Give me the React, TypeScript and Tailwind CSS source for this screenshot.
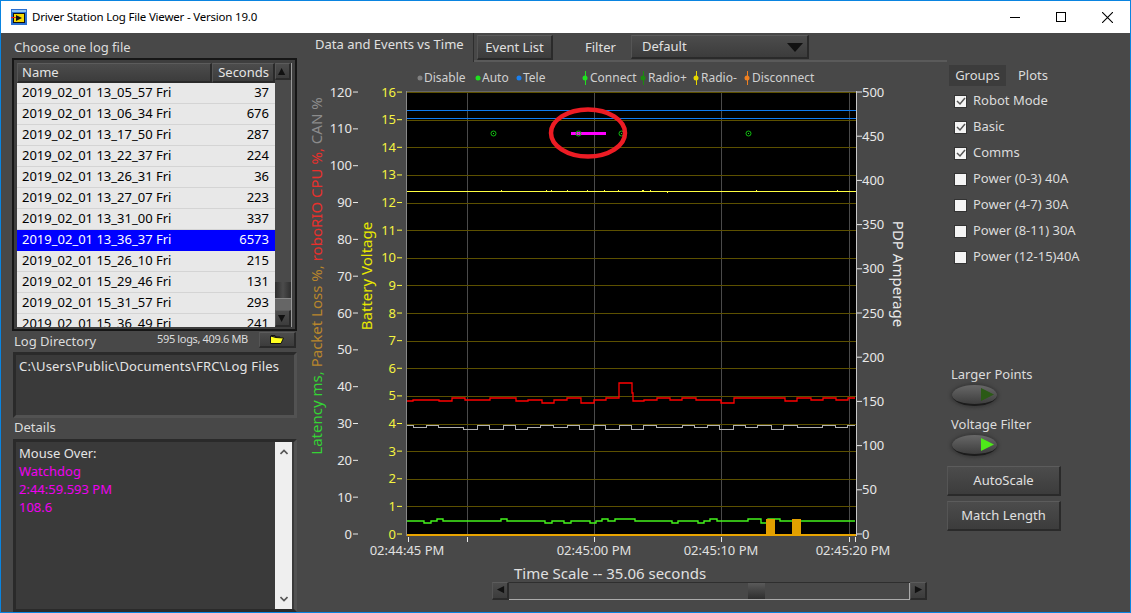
import type { ReactNode } from "react";

const logs = [
  ["2019_02_01 13_05_57 Fri", "37"],
  ["2019_02_01 13_06_34 Fri", "676"],
  ["2019_02_01 13_17_50 Fri", "287"],
  ["2019_02_01 13_22_37 Fri", "224"],
  ["2019_02_01 13_26_31 Fri", "36"],
  ["2019_02_01 13_27_07 Fri", "223"],
  ["2019_02_01 13_31_00 Fri", "337"],
  ["2019_02_01 13_36_37 Fri", "6573"],
  ["2019_02_01 15_26_10 Fri", "215"],
  ["2019_02_01 15_29_46 Fri", "131"],
  ["2019_02_01 15_31_57 Fri", "293"],
  ["2019_02_01 15_36_49 Fri", "241"],
];

const groups = [
  ["Robot Mode", true],
  ["Basic", true],
  ["Comms", true],
  ["Power (0-3) 40A", false],
  ["Power (4-7) 30A", false],
  ["Power (8-11) 30A", false],
  ["Power (12-15)40A", false],
] as const;

// step traces: [x where the step ends, y], in page pixels
const red = [[413, 401], [439, 400], [452, 401], [465, 398], [490, 400], [516, 398], [528, 401], [542, 400], [554, 403], [567, 400], [581, 398], [594, 403], [606, 400], [619, 398], [632, 383], [633, 393], [644, 401], [657, 400], [670, 398], [682, 400], [696, 398], [721, 400], [734, 403], [785, 398], [797, 401], [811, 398], [823, 400], [836, 398], [848, 400], [855, 398]];
const gray = [[413, 425], [426, 427], [438, 425], [463, 427], [477, 429], [489, 425], [503, 429], [515, 425], [527, 429], [540, 427], [553, 425], [567, 427], [579, 425], [593, 429], [605, 425], [619, 429], [631, 425], [643, 429], [656, 425], [682, 427], [694, 425], [707, 427], [719, 425], [733, 429], [745, 425], [757, 427], [771, 425], [783, 429], [797, 425], [822, 427], [835, 425], [847, 427], [855, 425]];
const green = [[424, 521], [431, 523], [437, 521], [443, 519], [501, 521], [507, 519], [545, 521], [552, 523], [564, 521], [571, 523], [590, 521], [596, 523], [602, 521], [608, 519], [615, 521], [622, 519], [635, 519], [672, 521], [678, 523], [698, 521], [704, 523], [710, 521], [717, 519], [748, 521], [761, 519], [768, 523], [780, 519], [855, 521]];

function stepPath(points: number[][]) {
  let x = 407;
  let d = "";
  points.forEach(([end, y], i) => {
    d += `${i === 0 ? "M" : "L"}${x} ${y}L${end} ${y}`;
    x = end;
  });
  return d;
}

const leftTicks = [120, 110, 100, 90, 80, 70, 60, 50, 40, 30, 20, 10, 0];
const voltTicks = [16, 15, 14, 13, 12, 11, 10, 9, 8, 7, 6, 5, 4, 3, 2, 1, 0];
const ampTicks = [500, 450, 400, 350, 300, 250, 200, 150, 100, 50, 0];
const yellowDots = [501, 546, 551, 567, 587, 604, 618, 642, 643, 650, 667, 756, 837];
const circles = [493, 578, 621, 748];
const timeTicks = [408, 467, 594, 721, 849, 855];
const timeLabels = [[407, "02:44:45 PM"], [594, "02:45:00 PM"], [721, "02:45:10 PM"], [853, "02:45:20 PM"]] as const;

function Chart() {
  const plotFont = { fontFamily: "'Noto Sans', sans-serif" };
  return (
    <svg viewBox="305 86 615 479" className="block w-[615px] h-[479px] ml-[5px]" style={plotFont}>
      <rect x="407" y="92" width="449" height="443" fill="#000" />
      <line x1="406.5" y1="91" x2="406.5" y2="536" stroke="#888" />
      <line x1="407" y1="91.5" x2="856" y2="91.5" stroke="#666" />
      <line x1="856.5" y1="91" x2="856.5" y2="536" stroke="#c8c8c8" />

      {[467, 594, 721, 849].map((x) => (
        <line key={x} x1={x + 0.5} y1="92" x2={x + 0.5} y2="535" stroke="#4a4a4a" />
      ))}
      {voltTicks.slice(0, -1).map((v) => {
        const y = Math.round(534 - v * 27.62) + 0.5;
        return <line key={v} x1="407" y1={y} x2="856" y2={y} stroke="#5c5000" />;
      })}

      <line x1="407" y1="110.5" x2="856" y2="110.5" stroke="#0f7bf0" />
      <line x1="407" y1="118.5" x2="856" y2="118.5" stroke="#0f7bf0" />
      <line x1="407" y1="191.5" x2="856" y2="191.5" stroke="#ffff40" />
      {yellowDots.map((x) => (
        <rect key={x} x={x} y={x === 667 ? 192 : 190} width="1" height="1" fill="#ffff40" />
      ))}

      <path d={stepPath(red)} fill="none" stroke="#ff0000" strokeWidth="1.3" />
      <path d={stepPath(gray)} fill="none" stroke="#b0b0b0" shapeRendering="crispEdges" />
      <path d={stepPath(green)} fill="none" stroke="#44f41c" strokeWidth="1.4" />

      <rect x="766" y="519" width="9" height="16" fill="#e2a000" />
      <rect x="792" y="519" width="9" height="16" fill="#e2a000" />
      <rect x="407" y="534" width="449" height="2" fill="#e8a400" />

      <rect x="571" y="132" width="35" height="3" fill="#ff00ff" />
      {circles.map((x) => (
        <g key={x}>
          <circle cx={x + 0.5} cy="133.5" r="2.5" fill="none" stroke="#10c010" />
          <rect x={x} y="133" width="1" height="1" fill="#20e020" />
        </g>
      ))}
      <ellipse cx="588" cy="133" rx="37" ry="23.5" fill="none" stroke="#ed1c24" strokeWidth="4.5" />

      {leftTicks.map((v) => {
        const y = 534 - v * 3.683;
        return (
          <g key={v}>
            <line x1="353" y1={y} x2="358" y2={y} stroke="#e8e8e8" />
            <text x="352" y={y + 4.5} fontSize="13" fill="#e8e8e8" textAnchor="end">{v}</text>
          </g>
        );
      })}
      {voltTicks.map((v) => {
        const y = 534 - v * 27.62;
        return (
          <g key={v}>
            <line x1="397" y1={y} x2="402" y2={y} stroke="#ffff40" />
            <text x="396" y={y + 4.5} fontSize="13" fill="#f4f440" textAnchor="end">{v}</text>
          </g>
        );
      })}
      {ampTicks.map((v) => {
        const y = 534 - v * 0.884;
        return (
          <g key={v}>
            <line x1="857" y1={y} x2="862" y2={y} stroke="#e8e8e8" />
            <text x="862" y={y + 4.5} fontSize="13" fill="#e8e8e8">{v}</text>
          </g>
        );
      })}

      {timeTicks.map((x) => (
        <line key={x} x1={x + 0.5} y1="537" x2={x + 0.5} y2="542" stroke="#e8e8e8" />
      ))}
      {timeLabels.map(([x, label]) => (
        <text key={label} x={x} y="555" fontSize="13" fill="#e0e0e0" textAnchor="middle">{label}</text>
      ))}

      <text transform="rotate(-90 322 276)" x="322" y="276" fontSize="15" textAnchor="middle">
        <tspan fill="#35d335">Latency ms, </tspan>
        <tspan fill="#b8862c">Packet Loss %, </tspan>
        <tspan fill="#e8302c">roboRIO CPU %, </tspan>
        <tspan fill="#8c8c8c">CAN %</tspan>
      </text>
      <text transform="rotate(-90 372 276)" x="372" y="276" fontSize="15" fill="#e8e800" textAnchor="middle">Battery Voltage</text>
      <text transform="rotate(90 893 274)" x="893" y="274" fontSize="15" fill="#e8e8e8" textAnchor="middle">PDP Amperage</text>
    </svg>
  );
}

function Bevel({ className, children }: { className: string; children?: ReactNode }) {
  return (
    <div className={`flex items-center border-t border-l border-t-[#5c5c5c] border-l-[#555] border-r-2 border-b-2 border-r-[#2a2a2a] border-b-[#2a2a2a] bg-linear-to-b from-[#4c4c4c] to-[#3c3c3c] ${className}`}>
      {children}
    </div>
  );
}

function Arrow({ dir }: { dir: "up" | "down" | "left" | "right" }) {
  const points = {
    up: "4,1 8,9 0,9",
    down: "0,1 8,1 4,9",
    left: "9,0 9,8 1,4",
    right: "1,0 9,4 1,8",
  }[dir];
  return (
    <svg viewBox="0 0 10 10" className="w-[9px] h-[9px]">
      <polygon points={points} fill="#111" />
    </svg>
  );
}

function LegendItem({ width, color, marker, label }: { width: string; color: string; marker?: boolean; label: string }) {
  return (
    <div className={`flex items-center ${width}`}>
      <svg viewBox="0 0 7 14" className={`w-[7px] h-[14px] shrink-0 ${marker ? "mr-[1px]" : ""}`}>
        {marker && <line x1="3.5" y1="0" x2="3.5" y2="14" stroke={color} />}
        <circle cx="3" cy="7" r="2.5" fill={color} />
      </svg>
      <span className="text-[12px] text-[#d0d0d0] leading-none">{label}</span>
    </div>
  );
}

function Toggle({ on, label }: { on: boolean; label: string }) {
  return (
    <div className="flex flex-col">
      <span className="text-[13px] leading-[18px] text-[#dcdcdc]">{label}</span>
      <div className="mt-[2px] ml-[1px] w-[45px] h-[21px] rounded-[50%] bg-linear-to-b from-[#686868] to-[#3e3e3e] border-b-2 border-[#1c1c1c] shadow-[0_0_3px_2px_#3a3a3a] flex items-center justify-end pr-[3px]">
        <svg viewBox="0 0 12 12" className="w-[13px] h-[13px]">
          <polygon points="0,0 12,6 0,12" fill={on ? "#4ee81a" : "#2b5a16"} />
        </svg>
      </div>
    </div>
  );
}

export default function App() {
  return (
    <div className="w-[1131px] h-[613px] flex flex-col overflow-hidden border border-[#0a84e0] bg-[#484848] font-['Noto_Sans',sans-serif]">
      {/* Title bar */}
      <div className="h-[32px] shrink-0 bg-white flex items-center">
        <svg viewBox="0 0 16 16" className="ml-[10px] w-[16px] h-[16px]">
          <rect x="0" y="0" width="16" height="16" fill="#2a6fd0" />
          <rect x="1" y="1" width="14" height="2" fill="#8cc4f4" />
          <rect x="2" y="4" width="12" height="10" fill="#111" />
          <rect x="3" y="5" width="10" height="8" fill="#f4d800" />
          <polygon points="5,6 11,9 5,12" fill="#111" />
          <rect x="0" y="8" width="5" height="1" fill="#e02020" />
        </svg>
        <span className="ml-[5px] text-[11.5px] text-black tracking-[-0.2px]">Driver Station Log File Viewer - Version 19.0</span>
        <div className="ml-auto flex items-center">
          <div className="w-[46px] flex justify-center"><div className="w-[10px] h-px bg-black" /></div>
          <div className="w-[46px] flex justify-center"><div className="w-[10px] h-[10px] border border-black" /></div>
          <div className="w-[46px] flex justify-center">
            <svg viewBox="0 0 10 10" className="w-[11px] h-[11px]">
              <path d="M0 0L10 10M10 0L0 10" stroke="#000" strokeWidth="1" fill="none" />
            </svg>
          </div>
        </div>
      </div>

      <div className="flex flex-1 min-h-0">
        {/* Left column: log list, directory, details */}
        <div className="w-[299px] shrink-0 pl-[11px] pr-[3px] flex flex-col">
          <div className="h-[25px] pl-[2px] pt-[4px] flex items-center text-[13px] text-[#dcdcdc]">Choose one log file</div>

          <div className="h-[273px] flex border-2 border-[#161616] bg-[#3e3e3e] pl-[3px] pt-[3px] pb-[2px] pr-[2px]">
            <div className="w-[258px] flex flex-col overflow-hidden">
              <div className="h-[20px] shrink-0 flex text-[13px] text-[#e4e4e4]">
                <Bevel className="w-[195px] pl-[4px]">Name</Bevel>
                <Bevel className="flex-1 justify-end pr-[4px]">Seconds</Bevel>
              </div>
              {logs.map(([name, seconds], i) => (
                <div
                  key={name}
                  className={`h-[21px] shrink-0 flex items-center justify-between pl-[5px] pr-[6px] text-[13px] border-b ${i === 7 ? "bg-[#0000ff] text-white border-[#0000ff]" : "bg-[#e8e8e8] text-black border-[#d4d4d4]"}`}
                >
                  <span>{name}</span>
                  <span>{seconds}</span>
                </div>
              ))}
            </div>
            <div className="w-[17px] flex flex-col bg-[#4a4a4a] border-r border-[#9a9a9a]">
              <Bevel className="h-[17px] shrink-0 justify-center"><Arrow dir="up" /></Bevel>
              <div className="flex-1" />
              <div className="h-[16px] shrink-0 bg-linear-to-r from-[#2e2e2e] via-[#4c4c4c] to-[#2e2e2e]" />
              <div className="h-[12px] shrink-0 bg-[#666] border-t border-[#888]" />
              <Bevel className="h-[17px] shrink-0 justify-center"><Arrow dir="down" /></Bevel>
            </div>
          </div>

          <div className="h-[21px] pl-[2px] flex items-center text-[#dcdcdc]">
            <span className="text-[13px] w-[143px]">Log Directory</span>
            <span className="text-[11px] w-[102px] -mt-[4px] tracking-[-0.35px]">595 logs, 409.6 MB</span>
            <Bevel className="w-[37px] h-[16px] -mt-[4px] justify-center">
              <svg viewBox="0 0 14 9" className="w-[14px] h-[9px]">
                <path d="M1 0.5H5L6 2H10V3.5" fill="none" stroke="#111" />
                <polygon points="0.5,1 6,2.5 13.5,3 11,8.5 0.5,8.5" fill="#ffff20" stroke="#111" />
              </svg>
            </Bevel>
          </div>

          <div className="h-[66px] ml-[1px] border-[3px] border-t-[#2a2a2a] border-l-[#2a2a2a] border-r-[#525252] border-b-[#525252] bg-[#3a3a3a] pl-[3px] pt-[2px] text-[13px] tracking-[0.17px] text-[#e4e4e4]">
            {"C:\\Users\\Public\\Documents\\FRC\\Log Files"}
          </div>

          <div className="h-[21px] pl-[2px] pb-[2px] flex items-center text-[13px] text-[#dcdcdc]">Details</div>

          <div className="flex-1 min-h-0 ml-[1px] flex border-[3px] border-t-[#2a2a2a] border-l-[#2a2a2a] border-r-[#525252] border-b-[#2a2a2a] bg-[#3a3a3a]">
            <div className="flex-1 pl-[3px] pt-[2px] text-[13px] leading-[18px]">
              <div className="text-[#e4e4e4]">Mouse Over:</div>
              <div className="text-[#f000f0]">Watchdog</div>
              <div className="text-[#f000f0]">2:44:59.593 PM</div>
              <div className="text-[#f000f0]">108.6</div>
            </div>
            <div className="w-[17px] mr-[2px] bg-[#efefef] flex flex-col justify-between items-center py-[7px]">
              <svg viewBox="0 0 8 6" className="w-[8px] h-[6px]"><path d="M0.5 5L4 1.5L7.5 5" fill="none" stroke="#555" strokeWidth="1.6" /></svg>
              <svg viewBox="0 0 8 6" className="w-[8px] h-[6px]"><path d="M0.5 1L4 4.5L7.5 1" fill="none" stroke="#555" strokeWidth="1.6" /></svg>
            </div>
          </div>
        </div>

        {/* Centre column: tabs, legend, chart, time scale */}
        <div className="w-[647px] shrink-0 flex flex-col">
          <div className="h-[29px] shrink-0 flex">
            <div className="w-[174px] pl-[15px] pt-[2px] text-[13px] text-[#e0e0e0] border-r border-[#2e2e2e]">Data and Events vs Time</div>
            <div className="flex-1 flex items-start pt-[2px] border-b-2 border-[#5a5a5a]">
              <Bevel className="w-[76px] h-[25px] ml-[3px] pt-[1px] justify-center text-[13px] text-[#e0e0e0]">Event List</Bevel>
              <span className="ml-[32px] mt-[3px] w-[46px] text-[13px] text-[#e0e0e0]">Filter</span>
              <Bevel className="w-[178px] h-[24px] pl-[10px] pr-[4px] pt-[1px] justify-between text-[13px] text-[#e0e0e0]">
                Default
                <svg viewBox="0 0 16 9" className="w-[16px] h-[9px]"><polygon points="0,0 16,0 8,9" fill="#111" /></svg>
              </Bevel>
            </div>
          </div>

          <div className="h-[24px] shrink-0 pl-[117px] pt-[8px] flex items-center">
            <LegendItem width="w-[58px]" color="#808080" label="Disable" />
            <LegendItem width="w-[41px]" color="#20e020" label="Auto" />
            <LegendItem width="w-[66px]" color="#1a80f0" label="Tele" />
            <LegendItem width="w-[58px]" color="#20e020" marker label="Connect" />
            <LegendItem width="w-[53px]" color="#1c8a10" marker label="Radio+" />
            <LegendItem width="w-[51px]" color="#e8d800" marker label="Radio-" />
            <LegendItem width="w-[70px]" color="#f08020" marker label="Disconnect" />
          </div>

          <Chart />

          <div className="h-[17px] shrink-0 pl-[214px] flex items-center text-[15px] text-[#e0e0e0]">Time Scale -- 35.06 seconds</div>

          <div className="h-[18px] shrink-0 ml-[192px] w-[435px] flex">
            <Bevel className="w-[17px] justify-center"><Arrow dir="left" /></Bevel>
            <div className="flex-1 flex border-t border-b border-t-[#2e2e2e] border-b-[#aaa]">
              <div className="w-[239px]" />
              <div className="w-[17px] bg-linear-to-b from-[#5a5a5a] to-[#2e2e2e]" />
              <div className="flex-1 border-r border-[#aaa]" />
            </div>
            <Bevel className="w-[17px] justify-center"><Arrow dir="right" /></Bevel>
          </div>
        </div>

        {/* Right column: plot groups and buttons */}
        <div className="flex-1 flex flex-col">
          <div className="h-[53px] shrink-0 flex items-end text-[13px] text-[#dcdcdc]">
            <div className="ml-[2px] w-[57px] h-[21px] pt-[1px] bg-[#3c3c3c] flex items-center justify-center">Groups</div>
            <div className="ml-[12px] h-[21px] pt-[1px] flex items-center">Plots</div>
          </div>
          <div className="mt-[2px] flex flex-col">
            {groups.map(([label, checked]) => (
              <div key={label} className="h-[26px] flex items-center pl-[7px] text-[13px] text-[#dcdcdc]">
                <div className="w-[13px] h-[13px] bg-[#f4f4f4] border border-[#333] flex items-center justify-center">
                  {checked && (
                    <svg viewBox="0 0 10 10" className="w-[10px] h-[10px]">
                      <path d="M1 5L4 8L9 2" fill="none" stroke="#555" strokeWidth="1.5" />
                    </svg>
                  )}
                </div>
                <span className="ml-[6px]">{label}</span>
              </div>
            ))}
          </div>
          <div className="mt-[95px] ml-[4px] flex flex-col gap-[9px]">
            <Toggle on={false} label="Larger Points" />
            <Toggle on label="Voltage Filter" />
          </div>
          <div className="mt-[10px] flex flex-col gap-[5px]">
            <Bevel className="w-[114px] h-[30px] justify-center text-[13px] text-[#e0e0e0]">AutoScale</Bevel>
            <Bevel className="w-[114px] h-[30px] justify-center text-[13px] text-[#e0e0e0]">Match Length</Bevel>
          </div>
        </div>
      </div>
    </div>
  );
}
